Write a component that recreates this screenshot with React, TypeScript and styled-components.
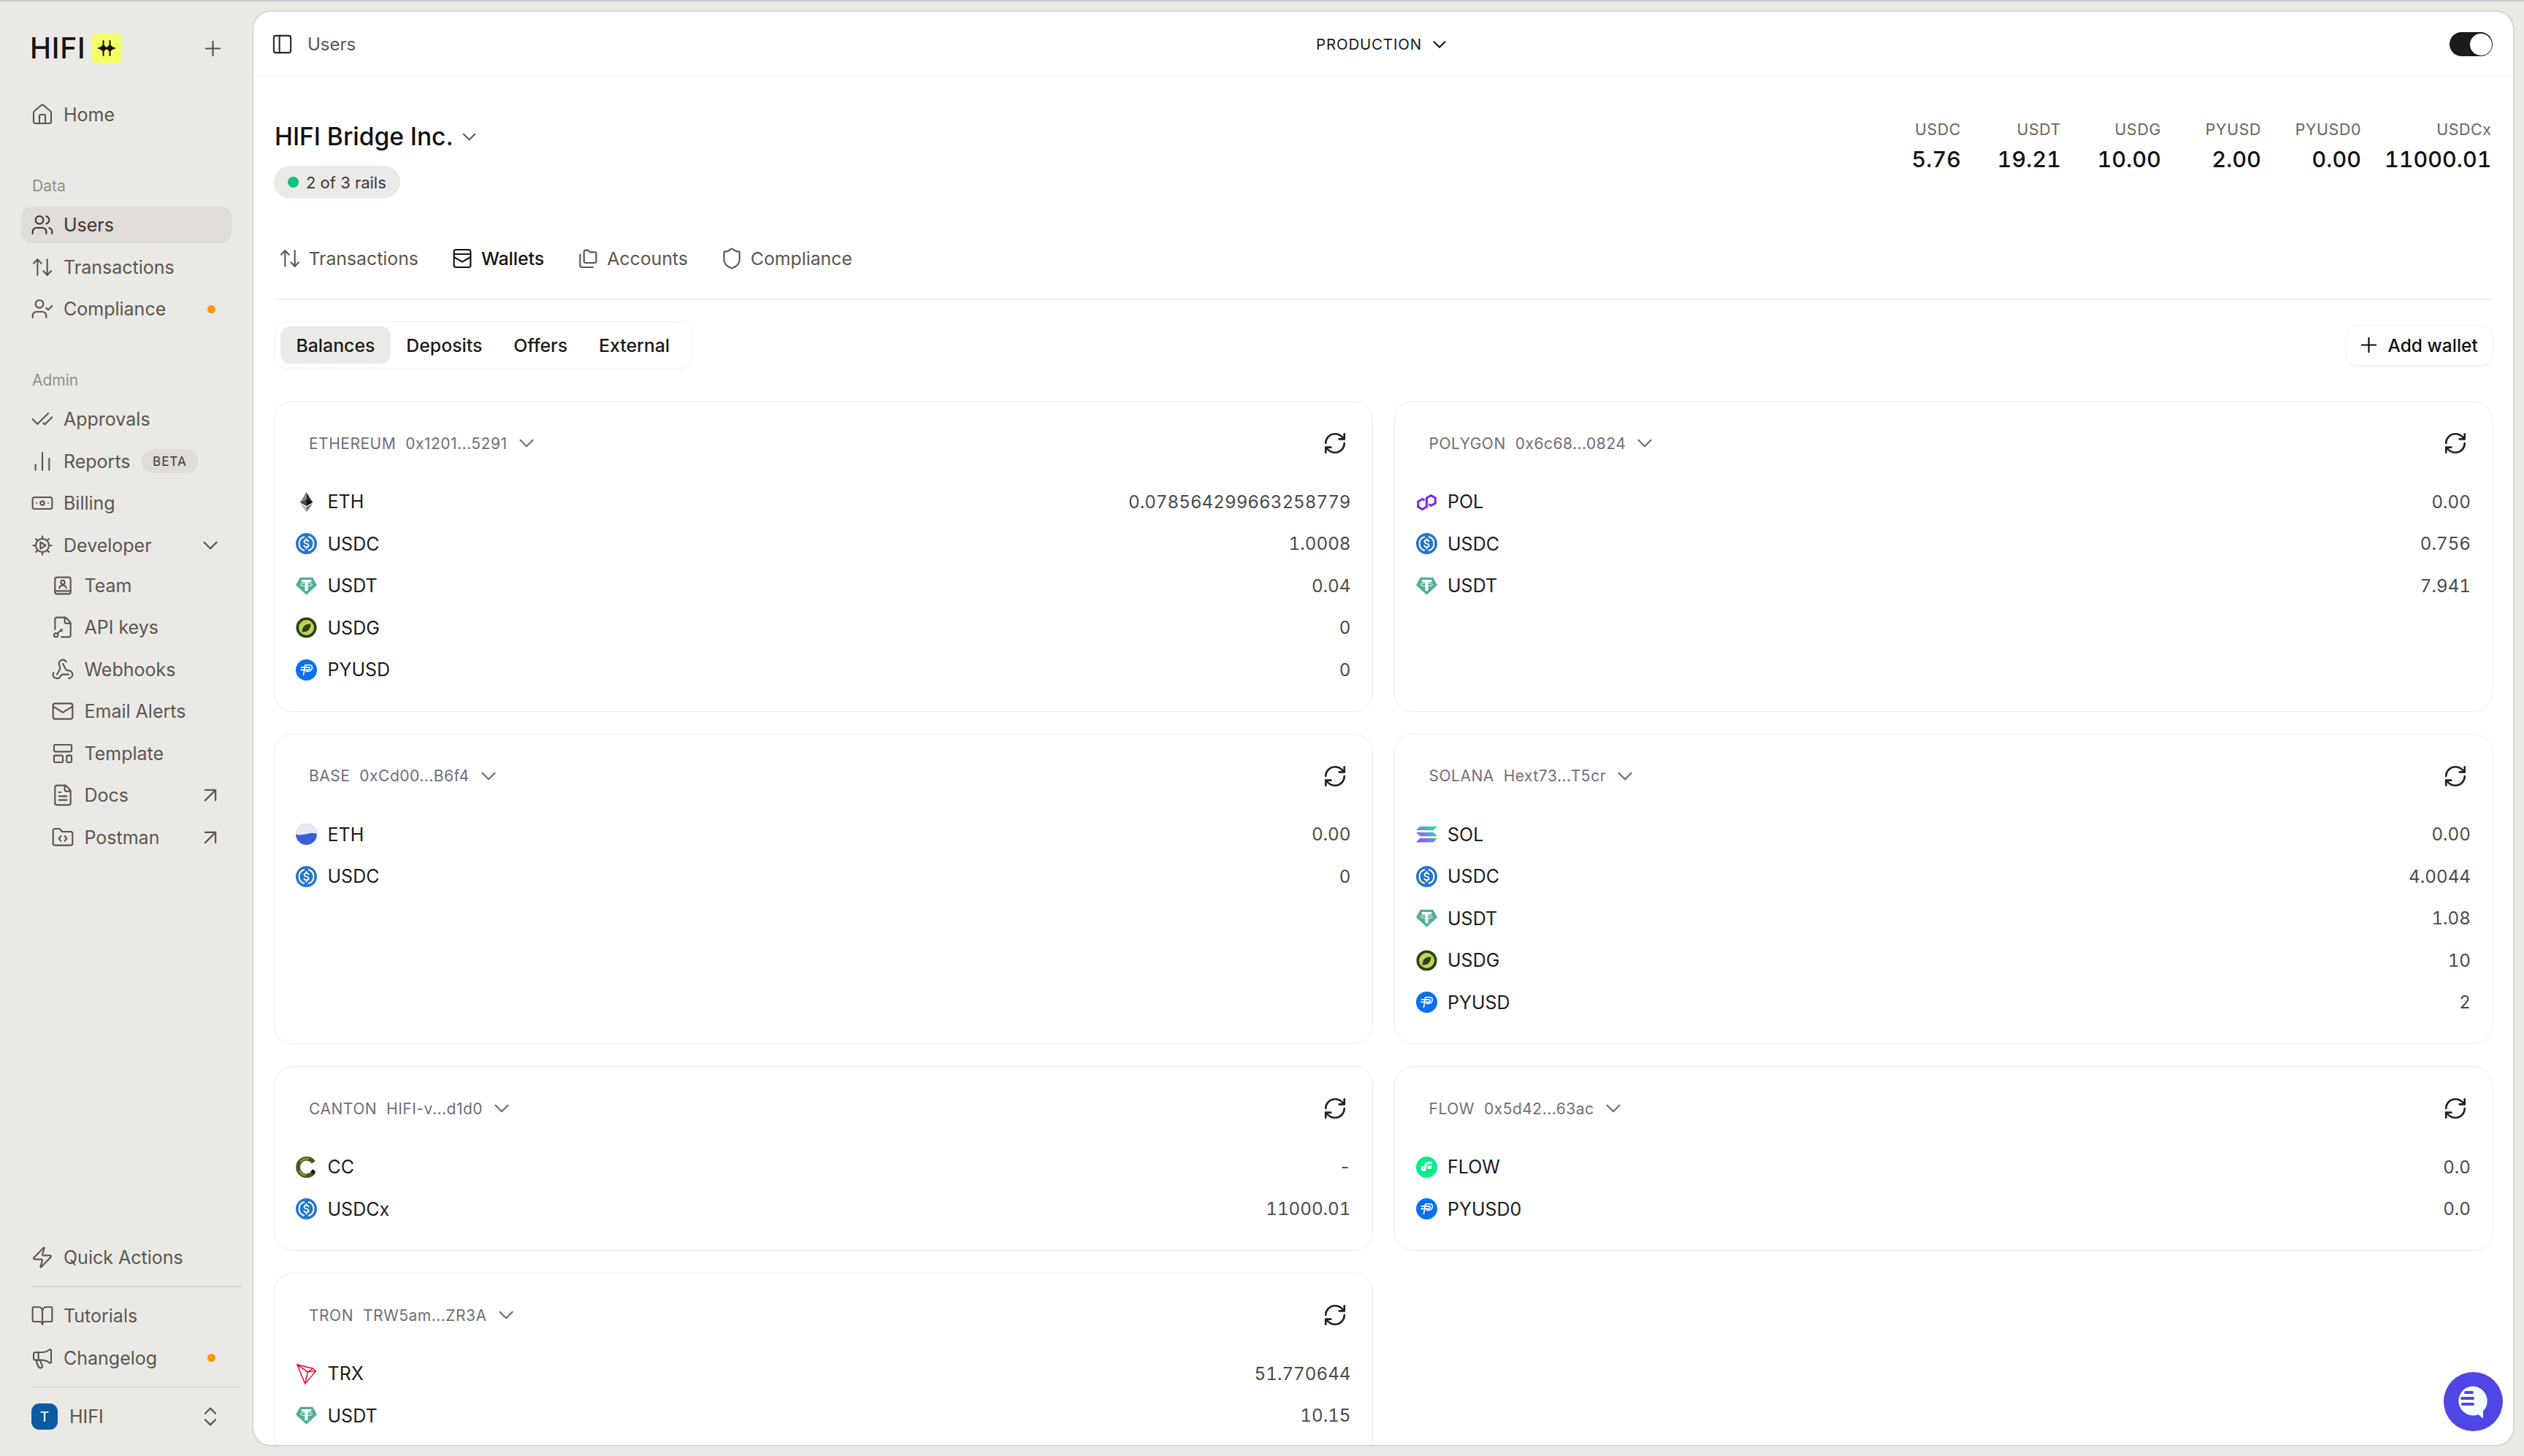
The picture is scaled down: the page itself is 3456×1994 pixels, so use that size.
import React from 'react';
import styled, { createGlobalStyle } from 'styled-components';
import {
  ArrowUpDown,
  ArrowUpRight,
  BookOpen,
  Banknote,
  ChartNoAxesColumn,
  CheckCheck,
  ChevronDown,
  ChevronsUpDown,
  FileKey2,
  FileText,
  FolderCode,
  House,
  LayoutTemplate,
  Mail,
  Megaphone,
  PanelLeft,
  Plus,
  RefreshCw,
  Shield,
  UserCheck,
  Users,
  Webhook,
  Zap,
} from 'lucide-react';

const GlobalStyle = createGlobalStyle`
  html, body {
    margin: 0;
    padding: 0;
    height: 100%;
    background: #eae9e6;
    font-family: Inter, "Liberation Sans", sans-serif;
  }
  #root { height: 100%; }
  * { box-sizing: border-box; }
`;

const Shell = styled.div`
  height: 1994px;
  display: flex;
  flex-direction: column;
  overflow: hidden;
  border-top: 2px solid #c9cccb;
`;

const Body = styled.div`
  flex: 1;
  min-height: 0;
  display: flex;
`;

const Sidebar = styled.aside`
  width: 347px;
  flex: none;
  display: flex;
  flex-direction: column;
  padding: 43px 16px 36px 29px;
`;

const LogoRow = styled.div`
  height: 42px;
  display: flex;
  align-items: center;
  padding-left: 12px;
  color: #5c564d;
  margin-bottom: 45px;

  & > svg:last-child {
    margin-left: auto;
    margin-right: 23px;
    width: 33px;
    height: 33px;
    stroke-width: 1.6;
  }
`;

const LogoText = styled.span`
  font-size: 39px;
  font-weight: 500;
  letter-spacing: 0.8px;
  line-height: 42px;
  color: #17130f;
  margin-right: 8px;
`;

const LogoMark = styled.span`
  width: 42px;
  height: 42px;
  border-radius: 8px;
  background: #f3ff6a;
  display: flex;
  align-items: center;
  justify-content: center;
`;

const SectionLabel = styled.div`
  height: 28px;
  line-height: 28px;
  margin: 59px 0 14px;
  padding-left: 15px;
  font-size: 21px;
  color: #94908a;
`;

const NavList = styled.div<{ $nested?: boolean }>`
  display: flex;
  flex-direction: column;
  gap: 7.5px;
  margin-top: ${p => (p.$nested ? '5px' : '0')};
`;

const NavRow = styled.div<{ $active?: boolean; $nested?: boolean }>`
  height: 50px;
  width: 288px;
  flex: none;
  display: flex;
  align-items: center;
  gap: 13.5px;
  padding: 0 22px 0 ${p => (p.$nested ? '41px' : '12.5px')};
  border-radius: 14px;
  background: ${p => (p.$active ? '#e1dcd7' : 'transparent')};
  color: ${p => (p.$active ? '#3d3830' : '#5c564d')};
  font-size: 25px;
`;

const NavIcon = styled.span`
  width: 32px;
  height: 32px;
  flex: none;
  display: flex;
  svg {
    width: 32px;
    height: 32px;
    stroke-width: 1.6;
  }
`;

const NavEnd = styled.span`
  margin-left: auto;
  margin-right: -10px;
  display: flex;
  svg {
    width: 34px;
    height: 34px;
    stroke-width: 1.6;
  }
`;

const AlertDot = styled.span`
  margin-left: auto;
  width: 11px;
  height: 11px;
  border-radius: 50%;
  background: #ff9500;
`;

const BetaTag = styled.span`
  margin-left: 2px;
  height: 33px;
  padding: 0 15px;
  border-radius: 17px;
  background: #e1dcd7;
  color: #3d3a35;
  font-size: 17px;
  letter-spacing: 1px;
  display: flex;
  align-items: center;
`;

const SidebarBottom = styled.div`
  margin-top: auto;
  display: flex;
  flex-direction: column;
`;

const SideDivider = styled.div<{ $thick?: boolean }>`
  height: ${p => (p.$thick ? '2px' : '1.5px')};
  margin: 14px 0 14px 14px;
  background: #d6d2cc;
`;

const Workspace = styled.div`
  display: flex;
  align-items: center;
  height: 36px;
  margin: 8px 0 0 14px;
  padding-right: 26px;
  color: #5c564d;
  font-size: 25px;

  svg {
    margin-left: auto;
    width: 34px;
    height: 34px;
    stroke-width: 1.6;
  }
`;

const Avatar = styled.span`
  width: 36px;
  height: 36px;
  border-radius: 11px;
  background: #0b5aa0;
  color: #e8f0f8;
  font-size: 19px;
  font-weight: 500;
  display: flex;
  align-items: center;
  justify-content: center;
  margin-right: 16px;
`;

const Main = styled.main`
  flex: 1;
  min-width: 0;
  margin: 14px 15px 15px 0;
  position: relative;
  display: flex;
  flex-direction: column;
  overflow: hidden;
  background: #fff;
  border-radius: 24px;
  box-shadow: 0 0 3px rgba(90, 80, 60, 0.45);
`;

const TopBar = styled.header`
  height: 88px;
  flex: none;
  display: grid;
  grid-template-columns: 1fr auto 1fr;
  align-items: center;
  padding: 2px 28px 0;
  border-bottom: 1.5px solid #f0efea;
`;

const Crumb = styled.div`
  display: flex;
  align-items: center;
  gap: 19px;
  margin-left: -4px;
  font-size: 24px;
  color: #5c564d;

  svg {
    width: 31px;
    height: 31px;
    stroke-width: 1.6;
    color: #2a2622;
  }
`;

const EnvSwitch = styled.div`
  display: flex;
  align-items: center;
  gap: 9px;
  font-size: 20.5px;
  letter-spacing: 0.8px;
  color: #1c1a17;

  svg {
    width: 30px;
    height: 30px;
    stroke-width: 1.7;
  }
`;

const Toggle = styled.div`
  justify-self: end;
  width: 59px;
  height: 33px;
  border-radius: 17px;
  background: #1b1b1b;
  padding: 1.5px;
  display: flex;
  justify-content: flex-end;
`;

const ToggleKnob = styled.span`
  width: 30px;
  height: 30px;
  border-radius: 50%;
  background: #fff;
`;

const Content = styled.div`
  flex: 1;
  min-height: 0;
  overflow: hidden;
  padding: 0 28px;
`;

const TitleRow = styled.div`
  display: flex;
  justify-content: space-between;
  align-items: flex-start;
  padding-top: 61px;
`;

const TitleBlock = styled.div`
  display: flex;
  flex-direction: column;
  align-items: flex-start;
  gap: 18px;
`;

const Title = styled.h1`
  margin: 0;
  height: 44px;
  display: flex;
  align-items: center;
  gap: 6px;
  padding-left: 1px;
  font-size: 33.5px;
  font-weight: 500;
  color: #111;

  svg {
    width: 31px;
    height: 31px;
    stroke-width: 1.5;
    color: #4a4a4a;
  }
`;

const RailPill = styled.div`
  height: 45px;
  display: flex;
  align-items: center;
  gap: 10px;
  padding: 0 19px;
  border-radius: 23px;
  background: #ebeae7;
  font-size: 22px;
  color: #3d3830;
`;

const RailDot = styled.span`
  width: 15px;
  height: 15px;
  border-radius: 50%;
  background: #10c07e;
`;

const Stats = styled.div`
  display: flex;
  gap: 32px;
  margin-top: -2px;
  padding-right: 1.5px;
`;

const Stat = styled.div`
  min-width: 105px;
  display: flex;
  flex-direction: column;
  align-items: flex-end;
`;

const StatLabel = styled.div`
  height: 28px;
  line-height: 28px;
  font-size: 21.5px;
  letter-spacing: 0.5px;
  color: #6b655c;
  margin-bottom: 5px;
`;

const StatValue = styled.div`
  height: 44px;
  line-height: 44px;
  font-size: 30.5px;
  font-weight: 500;
  font-variant-numeric: tabular-nums;
  color: #111;
`;

const PageTabs = styled.nav`
  display: flex;
  gap: 44px;
  height: 50px;
  margin-top: 57px;
  padding-left: 5.5px;
`;

const PageTab = styled.div<{ $active?: boolean }>`
  display: flex;
  align-items: center;
  gap: 10px;
  font-size: 24.8px;
  color: ${p => (p.$active ? '#17130f' : '#5c564d')};
  font-weight: ${p => (p.$active ? 500 : 400)};

  svg {
    width: 32px;
    height: 32px;
    stroke-width: 1.6;
  }
`;

const Rule = styled.div`
  height: 1.5px;
  margin-top: 30px;
  background: #f0efec;
`;

const Toolbar = styled.div`
  display: flex;
  justify-content: space-between;
  align-items: center;
  margin-top: 29px;
`;

const Segments = styled.div`
  height: 66px;
  display: flex;
  align-items: center;
  padding: 0 8px;
  border: 1.5px solid #f0efec;
  border-radius: 20px;
`;

const Segment = styled.div<{ $active?: boolean }>`
  height: 51px;
  display: flex;
  align-items: center;
  padding: 0 21.5px;
  border-radius: 13px;
  font-size: 24.8px;
  font-weight: 500;
  color: #1c1a17;
  background: ${p => (p.$active ? '#ebeae7' : 'transparent')};
`;

const AddButton = styled.div`
  width: 201px;
  height: 56px;
  display: flex;
  align-items: center;
  gap: 10px;
  padding-left: 13.5px;
  border: 1.5px solid #f2f1ee;
  border-radius: 16px;
  box-shadow: 0 1px 3px rgba(0, 0, 0, 0.06);
  font-size: 24.5px;
  font-weight: 500;
  color: #111;

  svg {
    width: 33px;
    height: 33px;
    stroke-width: 1.6;
  }
`;

const CardGrid = styled.div`
  display: grid;
  grid-template-columns: 1fr 1fr;
  column-gap: 29px;
  row-gap: 30px;
  margin-top: 43.5px;
`;

const Card = styled.section`
  border: 1.5px solid #ebebe9;
  border-radius: 26px;
  padding: 0 29px 27.5px;
`;

const CardHead = styled.div`
  height: 108.5px;
  padding: 32px 4.5px 0 18px;
  display: flex;
  align-items: flex-start;
  justify-content: space-between;
`;

const ChainSelect = styled.div`
  height: 50px;
  display: flex;
  align-items: center;
  gap: 13px;
  font-size: 21px;
  letter-spacing: 0.5px;
  color: #6f6e7a;

  svg {
    width: 34px;
    height: 34px;
    stroke-width: 1.6;
    margin-left: -4px;
  }
`;

const RefreshBtn = styled.div`
  height: 50px;
  display: flex;
  align-items: center;
  color: #222;

  svg {
    width: 34px;
    height: 34px;
    stroke-width: 1.9;
  }
`;

const TokenRow = styled.div`
  height: 57.5px;
  display: flex;
  align-items: center;
  gap: 14.5px;
  font-size: 25px;
  color: #1c1c1c;
`;

const TokenIcon = styled.span`
  width: 29px;
  height: 29px;
  flex: none;
  display: flex;
  svg {
    width: 29px;
    height: 29px;
  }
`;

const TokenAmount = styled.span`
  margin-left: auto;
  color: #4a4a4a;
  font-size: 24.2px;
  font-variant-numeric: tabular-nums;
`;

const ChatButton = styled.div`
  position: absolute;
  right: 14px;
  bottom: 19px;
  width: 81px;
  height: 81px;
  border-radius: 50%;
  background: #4f46e5;
  display: flex;

  svg {
    width: 81px;
    height: 81px;
  }
`;

/* ---- drawn icons ---- */

const base = {
  viewBox: '0 0 24 24',
  fill: 'none',
  stroke: 'currentColor',
  strokeLinecap: 'round' as const,
  strokeLinejoin: 'round' as const,
};

const DeveloperIcon = () => (
  <svg {...base}>
    <circle cx="12" cy="12" r="6.800" />
    <path d="M12 2.500v2.700M12 18.800v2.700M2.500 12h2.700M18.800 12h2.700M5.300 5.300l1.900 1.900M16.800 16.800l1.900 1.900M5.300 18.700l1.900-1.900M16.800 7.200l1.900-1.900" />
    <path d="M10 8.600l5.400 3.400-5.400 3.400z" />
  </svg>
);

const TeamIcon = () => (
  <svg {...base}>
    <rect x="4" y="3.500" width="16" height="17" rx="2" />
    <path d="M4 17.500h16" />
    <circle cx="12" cy="8.600" r="2" />
    <path d="M8.400 14.500c.4-2 1.900-2.700 3.600-2.700s3.200.7 3.600 2.700" />
  </svg>
);

const WalletIcon = () => (
  <svg {...base}>
    <rect x="3.500" y="3" width="17" height="18" rx="2" />
    <path d="M3.500 7.500h17M3.500 10.500l8.500 5 8.500-5" />
  </svg>
);

const AccountsIcon = () => (
  <svg {...base}>
    <path d="M8 5a1.500 1.500 0 0 1 1.500-1.500h2.500l2 2h5a1.500 1.500 0 0 1 1.500 1.500v8a1.500 1.500 0 0 1-1.500 1.500h-9.500a1.500 1.500 0 0 1-1.500-1.500z" />
    <path d="M4 8v11a2 2 0 0 0 2 2h11" />
  </svg>
);

const HifiMark = () => (
  <svg width="26" height="24" viewBox="0 0 26 24" fill="#17130f">
    <rect x="7.500" y="1" width="2" height="22" rx="1" />
    <rect x="16.500" y="1" width="2" height="22" rx="1" />
    <path d="M0 12l5-2 3.500-3 3.500 3 1.500 2-1.500 2-3.500 3-3.500-3z" />
    <path d="M12 12l2-2 3.500-3 3.500 3 5 2-5 2-3.500 3-3.500-3z" />
  </svg>
);

const EthLogo = () => (
  <svg viewBox="0 0 32 32">
    <path d="M16 1l-9.500 15.500 9.500 5.600z" fill="#8a8a8a" />
    <path d="M16 1l9.500 15.500-9.500 5.600z" fill="#2c2c2c" />
    <path d="M6.500 16.500l9.500-4.300v9.900z" fill="#4a4a4a" />
    <path d="M25.500 16.500l-9.500-4.300v9.900z" fill="#111" />
    <path d="M6.500 18.300l9.500 13v-7.400z" fill="#b5b5b5" />
    <path d="M25.500 18.300l-9.500 13v-7.400z" fill="#6a6a6a" />
  </svg>
);

const UsdcLogo = () => (
  <svg viewBox="0 0 32 32">
    <circle cx="16" cy="16" r="16" fill="#2775ca" />
    <g fill="none" stroke="#fff" strokeLinecap="round">
      <path d="M12.300 5.800a10.800 10.800 0 0 0 0 20.400" strokeWidth="2.200" />
      <path d="M19.700 5.800a10.800 10.800 0 0 1 0 20.400" strokeWidth="2.200" />
      <path d="M19.300 12.800c-.4-1.500-1.700-2.200-3.300-2.200-1.900 0-3.300 1-3.300 2.600 0 3.800 6.700 1.900 6.700 5.600 0 1.700-1.500 2.600-3.400 2.600-1.700 0-3.100-.8-3.500-2.300" strokeWidth="1.900" />
      <path d="M16 8.400v2.200M16 21.400v2.200" strokeWidth="1.900" />
    </g>
  </svg>
);

const TetherLogo = () => (
  <svg viewBox="0 0 32 32">
    <path d="M6.500 3h19L32 14.500 16 29.500 0 14.500z" fill="#53ae94" />
    <path d="M8.500 6.500h15v3.600h-5.300v13.400h-4.400V10.100H8.500z" fill="#fff" />
    <ellipse cx="16" cy="14" rx="9" ry="2.300" fill="none" stroke="#fff" strokeWidth="1.100" />
  </svg>
);

const UsdgLogo = () => (
  <svg viewBox="0 0 32 32">
    <circle cx="16" cy="16" r="15.500" fill="#2f3f10" />
    <circle cx="16" cy="16" r="11.500" fill="#b7d85a" />
    <path d="M9.500 22.500C9 15 14.500 9.500 22.500 10.500 23 18 17.500 23.500 9.500 22.500z" fill="#2f3f10" />
    <path d="M21 16.500l7-.8" stroke="#b7d85a" strokeWidth="1.200" />
  </svg>
);

const PyusdLogo = () => (
  <svg viewBox="0 0 32 32">
    <circle cx="16" cy="16" r="16" fill="#0a6ff0" />
    <g fill="none" stroke="#fff" strokeWidth="1.800" strokeLinejoin="round">
      <path d="M11.500 24.500l2.600-16h6.200c3.200 0 4.900 1.900 4.400 4.700-.5 2.900-2.900 4.800-6.100 4.800h-3.800" />
      <path d="M7.500 12h11.800c1.300 0 2 .8 1.800 1.900-.2 1.100-1.200 1.900-2.500 1.900H7" />
    </g>
  </svg>
);

const PolLogo = () => (
  <svg viewBox="0 0 32 32">
    <path
      d="M13 13.500L9.500 11.500 3 15.300v8L9.500 27l6.500-3.700V9.700L22.500 6 29 9.700v8L22.500 21.500 19 19.500"
      fill="none"
      stroke="#7b2cf0"
      strokeWidth="3.400"
    />
  </svg>
);

const SolLogo = () => (
  <svg viewBox="0 0 32 32">
    <defs>
      <linearGradient id="sol-grad" gradientUnits="userSpaceOnUse" x1="4" y1="30" x2="28" y2="2">
        <stop offset="0" stopColor="#9945ff" />
        <stop offset="0.5" stopColor="#6a8fe0" />
        <stop offset="1" stopColor="#14f195" />
      </linearGradient>
    </defs>
    <g fill="url(#sol-grad)">
      <path d="M6 4h26l-6 6H0z" />
      <path d="M0 13h26l6 6H6z" />
      <path d="M6 22h26l-6 6H0z" />
    </g>
  </svg>
);

const BaseEthLogo = () => (
  <svg viewBox="0 0 32 32">
    <circle cx="16" cy="16" r="16" fill="#3560d8" />
    <path d="M0 16A16 16 0 0 1 32 16C24 11 9 20 0 16z" fill="#e6e9f4" />
  </svg>
);

const CantonLogo = () => (
  <svg viewBox="0 0 32 32" fill="none">
    <path d="M27 8.500A13 13 0 1 0 27 23.500" stroke="#4f5520" strokeWidth="6.400" />
    <path d="M7 8A13 13 0 0 1 20 3.700M5 21a13 13 0 0 0 10 7" stroke="#8e9140" strokeWidth="3" />
    <path d="M24 21l4.500 3.500" stroke="#000" strokeWidth="5" />
  </svg>
);

const FlowLogo = () => (
  <svg viewBox="0 0 32 32">
    <circle cx="16" cy="16" r="16" fill="#00ef8b" />
    <path d="M24 9.500h-5a5 5 0 0 0-5 5V18a2.500 2.500 0 1 1-2.500-2.500" fill="none" stroke="#fff" strokeWidth="3.400" />
    <rect x="17.500" y="13.500" width="6" height="5" fill="#fff" />
  </svg>
);

const TronLogo = () => (
  <svg viewBox="0 0 32 32" fill="none" stroke="#ef0027" strokeWidth="1.600" strokeLinejoin="round">
    <path d="M2 2l24 6 4 4-16 19z" />
    <path d="M2 2l16 11-4 18M18 13l12-1M18 13l8-5" />
  </svg>
);

/* ---- data ---- */

type Token = { icon: React.ComponentType; name: string; amount: string };
type Wallet = { chain: string; address: string; tokens: Token[] };

const wallets: Wallet[] = [
  {
    chain: 'ETHEREUM',
    address: '0x1201...5291',
    tokens: [
      { icon: EthLogo, name: 'ETH', amount: '0.078564299663258779' },
      { icon: UsdcLogo, name: 'USDC', amount: '1.0008' },
      { icon: TetherLogo, name: 'USDT', amount: '0.04' },
      { icon: UsdgLogo, name: 'USDG', amount: '0' },
      { icon: PyusdLogo, name: 'PYUSD', amount: '0' },
    ],
  },
  {
    chain: 'POLYGON',
    address: '0x6c68...0824',
    tokens: [
      { icon: PolLogo, name: 'POL', amount: '0.00' },
      { icon: UsdcLogo, name: 'USDC', amount: '0.756' },
      { icon: TetherLogo, name: 'USDT', amount: '7.941' },
    ],
  },
  {
    chain: 'BASE',
    address: '0xCd00...B6f4',
    tokens: [
      { icon: BaseEthLogo, name: 'ETH', amount: '0.00' },
      { icon: UsdcLogo, name: 'USDC', amount: '0' },
    ],
  },
  {
    chain: 'SOLANA',
    address: 'Hext73...T5cr',
    tokens: [
      { icon: SolLogo, name: 'SOL', amount: '0.00' },
      { icon: UsdcLogo, name: 'USDC', amount: '4.0044' },
      { icon: TetherLogo, name: 'USDT', amount: '1.08' },
      { icon: UsdgLogo, name: 'USDG', amount: '10' },
      { icon: PyusdLogo, name: 'PYUSD', amount: '2' },
    ],
  },
  {
    chain: 'CANTON',
    address: 'HIFI-v...d1d0',
    tokens: [
      { icon: CantonLogo, name: 'CC', amount: '-' },
      { icon: UsdcLogo, name: 'USDCx', amount: '11000.01' },
    ],
  },
  {
    chain: 'FLOW',
    address: '0x5d42...63ac',
    tokens: [
      { icon: FlowLogo, name: 'FLOW', amount: '0.0' },
      { icon: PyusdLogo, name: 'PYUSD0', amount: '0.0' },
    ],
  },
  {
    chain: 'TRON',
    address: 'TRW5am...ZR3A',
    tokens: [
      { icon: TronLogo, name: 'TRX', amount: '51.770644' },
      { icon: TetherLogo, name: 'USDT', amount: '10.15' },
    ],
  },
];

const balances = [
  { label: 'USDC', value: '5.76' },
  { label: 'USDT', value: '19.21' },
  { label: 'USDG', value: '10.00' },
  { label: 'PYUSD', value: '2.00' },
  { label: 'PYUSD0', value: '0.00' },
  { label: 'USDCx', value: '11000.01' },
];

const devLinks = [
  { icon: TeamIcon, label: 'Team' },
  { icon: FileKey2, label: 'API keys' },
  { icon: Webhook, label: 'Webhooks' },
  { icon: Mail, label: 'Email Alerts' },
  { icon: LayoutTemplate, label: 'Template' },
  { icon: FileText, label: 'Docs', external: true },
  { icon: FolderCode, label: 'Postman', external: true },
];

const WalletCard: React.FC<{ wallet: Wallet }> = ({ wallet }) => (
  <Card>
    <CardHead>
      <ChainSelect>
        <span>{wallet.chain}</span>
        <span>{wallet.address}</span>
        <ChevronDown />
      </ChainSelect>
      <RefreshBtn>
        <RefreshCw />
      </RefreshBtn>
    </CardHead>
    {wallet.tokens.map(token => (
      <TokenRow key={token.name}>
        <TokenIcon>
          <token.icon />
        </TokenIcon>
        {token.name}
        <TokenAmount>{token.amount}</TokenAmount>
      </TokenRow>
    ))}
  </Card>
);

const App: React.FC = () => (
  <Shell>
    <GlobalStyle />
    <Body>
      <Sidebar>
        <LogoRow>
          <LogoText>HIFI</LogoText>
          <LogoMark>
            <HifiMark />
          </LogoMark>
          <Plus />
        </LogoRow>

        <NavRow>
          <NavIcon><House /></NavIcon>
          Home
        </NavRow>

        <SectionLabel>Data</SectionLabel>
        <NavList>
          <NavRow $active>
            <NavIcon><Users /></NavIcon>
            Users
          </NavRow>
          <NavRow>
            <NavIcon><ArrowUpDown /></NavIcon>
            Transactions
          </NavRow>
          <NavRow>
            <NavIcon><UserCheck /></NavIcon>
            Compliance
            <AlertDot />
          </NavRow>
        </NavList>

        <SectionLabel>Admin</SectionLabel>
        <NavList>
          <NavRow>
            <NavIcon><CheckCheck /></NavIcon>
            Approvals
          </NavRow>
          <NavRow>
            <NavIcon><ChartNoAxesColumn /></NavIcon>
            Reports
            <BetaTag>BETA</BetaTag>
          </NavRow>
          <NavRow>
            <NavIcon><Banknote /></NavIcon>
            Billing
          </NavRow>
          <NavRow>
            <NavIcon><DeveloperIcon /></NavIcon>
            Developer
            <NavEnd><ChevronDown /></NavEnd>
          </NavRow>
        </NavList>
        <NavList $nested>
          {devLinks.map(link => (
            <NavRow $nested key={link.label}>
              <NavIcon><link.icon /></NavIcon>
              {link.label}
              {link.external && <NavEnd><ArrowUpRight /></NavEnd>}
            </NavRow>
          ))}
        </NavList>

        <SidebarBottom>
          <NavRow>
            <NavIcon><Zap /></NavIcon>
            Quick Actions
          </NavRow>
          <SideDivider $thick />
          <NavList>
            <NavRow>
              <NavIcon><BookOpen /></NavIcon>
              Tutorials
            </NavRow>
            <NavRow>
              <NavIcon><Megaphone /></NavIcon>
              Changelog
              <AlertDot />
            </NavRow>
          </NavList>
          <SideDivider />
          <Workspace>
            <Avatar>T</Avatar>
            HIFI
            <ChevronsUpDown />
          </Workspace>
        </SidebarBottom>
      </Sidebar>

      <Main>
        <TopBar>
          <Crumb>
            <PanelLeft />
            Users
          </Crumb>
          <EnvSwitch>
            PRODUCTION
            <ChevronDown />
          </EnvSwitch>
          <Toggle>
            <ToggleKnob />
          </Toggle>
        </TopBar>

        <Content>
          <TitleRow>
            <TitleBlock>
              <Title>
                HIFI Bridge Inc.
                <ChevronDown />
              </Title>
              <RailPill>
                <RailDot />
                2 of 3 rails
              </RailPill>
            </TitleBlock>
            <Stats>
              {balances.map(b => (
                <Stat key={b.label}>
                  <StatLabel>{b.label}</StatLabel>
                  <StatValue>{b.value}</StatValue>
                </Stat>
              ))}
            </Stats>
          </TitleRow>

          <PageTabs>
            <PageTab><ArrowUpDown />Transactions</PageTab>
            <PageTab $active><WalletIcon />Wallets</PageTab>
            <PageTab><AccountsIcon />Accounts</PageTab>
            <PageTab><Shield />Compliance</PageTab>
          </PageTabs>
          <Rule />

          <Toolbar>
            <Segments>
              <Segment $active>Balances</Segment>
              <Segment>Deposits</Segment>
              <Segment>Offers</Segment>
              <Segment>External</Segment>
            </Segments>
            <AddButton>
              <Plus />
              Add wallet
            </AddButton>
          </Toolbar>

          <CardGrid>
            {wallets.map(w => (
              <WalletCard key={w.chain} wallet={w} />
            ))}
          </CardGrid>
        </Content>

        <ChatButton>
          <svg viewBox="0 0 81 81">
            <path d="M40.500 19.500a20 20 0 1 0 7 38.700l6.500 5.300v-10a20 20 0 0 0-13.500-34z" fill="#f4fdff" />
            <g stroke="#4f46e5" strokeWidth="4" strokeLinecap="round">
              <path d="M30 28h9M25 36h15M26 44h14" />
            </g>
          </svg>
        </ChatButton>
      </Main>
    </Body>
  </Shell>
);

export default App;
